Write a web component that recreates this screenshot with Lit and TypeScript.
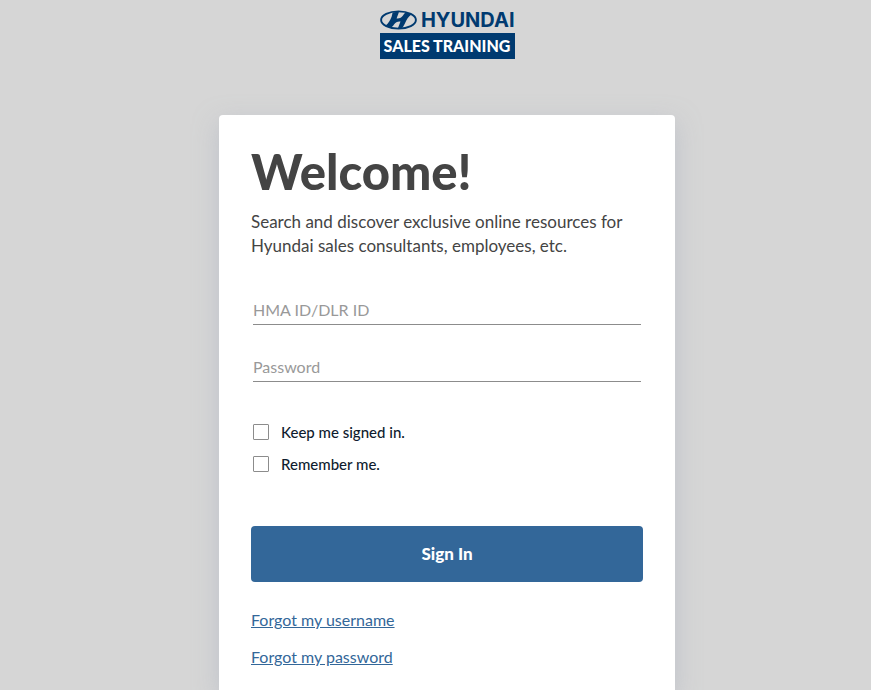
import { LitElement, html, css } from "lit";
import { customElement } from "lit/decorators.js";

@customElement("brand-logo")
class BrandLogo extends LitElement {
  static styles = css`
    :host {
      display: block;
      width: 135px;
      color: #003a70;
    }
    .top {
      display: flex;
      align-items: center;
      justify-content: space-between;
      height: 18px;
    }
    .mark {
      display: block;
      width: 37px;
      height: 20px;
    }
    .name {
      font: 700 20px/18px Inter, sans-serif;
    }
    .sub {
      margin-top: 4px;
      background: #003a70;
      color: #fff;
      font: 900 16px/26px Lato, sans-serif;
      height: 26px;
      text-align: center;
      white-space: nowrap;
    }
  `;

  render() {
    return html`
      <div class="top">
        <svg class="mark" viewBox="0 0 37 20" fill="currentColor" aria-hidden="true">
          <ellipse cx="18.5" cy="10" rx="17.4" ry="8.6" fill="none" stroke="currentColor" stroke-width="1.9" />
          <path
            d="M12.6 2.6 L19 1.6 C18.4 4.2 17.2 6.8 16.6 8.4 C19.4 8.8 21.4 7.6 23 5.4 C24.2 3.7 25 2.8 26.4 2.6 L31.4 4.6 C28.4 6.4 26.6 10 24.9 13.4 C23.6 16 22.6 17.6 21.6 18.2 L17.8 18.6 C18.8 16 19.8 13.6 20.5 11.6 C17.6 11.2 15.6 12.4 14 14.6 C12.8 16.4 12 17.4 10.6 17.5 L5.6 15.4 C8.6 13.6 10.2 10 11.6 6.8 C12.2 5.4 12.2 4 12.6 2.6 Z"
          />
        </svg>
        <span class="name">HYUNDAI</span>
      </div>
      <div class="sub">SALES TRAINING</div>
    `;
  }
}

@customElement("app-root")
class AppRoot extends LitElement {
  static styles = css`
    :host {
      display: flex;
      flex-direction: column;
      align-items: center;
      box-sizing: border-box;
      min-height: 100vh;
      padding: 11px 0 0 23px;
      overflow: hidden;
      background: #d6d6d6;
      color: #444;
      font-family: Lato, sans-serif;
    }
    .card {
      flex: 1;
      box-sizing: border-box;
      width: 100%;
      max-width: 456px;
      margin-top: 56px;
      padding: 32px 32px 20px;
      background: #fff;
      border-radius: 4px 4px 0 0;
      box-shadow: 0 8px 24px rgba(165, 173, 190, 0.5);
    }
    h1 {
      margin: 0;
      font-size: 49px;
      line-height: 48px;
      font-weight: 900;
    }
    .intro {
      margin: 15px 0 0;
      font-size: 17px;
      line-height: 24px;
    }
    .fields {
      display: grid;
      gap: 28px;
      margin: 38px 2px 0;
    }
    .field {
      box-sizing: border-box;
      width: 100%;
      height: 29px;
      padding: 0 0 2px;
      border: 0;
      border-bottom: 1px solid #8c8c8c;
      border-radius: 0;
      background: none;
      color: #444;
      font: 16px Lato, sans-serif;
    }
    .field::placeholder {
      color: #999;
      opacity: 1;
    }
    .checks {
      display: grid;
      gap: 16px;
      margin: 42px 2px 0;
    }
    .check {
      display: flex;
      align-items: center;
      gap: 12px;
      color: #0f1c2e;
      font: 500 15px/16px Lato, sans-serif;
    }
    .box {
      appearance: none;
      flex: none;
      width: 16px;
      height: 16px;
      margin: 0;
      border: 1px solid #8c8c8c;
      border-radius: 1px;
      background: #fff;
    }
    .box:checked {
      background: #336799;
    }
    .submit {
      display: block;
      width: 100%;
      height: 56px;
      margin-top: 54px;
      padding: 0 0 2px;
      border: 0;
      border-radius: 4px;
      background: #336799;
      color: #fff;
      font: 900 17px Lato, sans-serif;
      cursor: pointer;
    }
    .links {
      display: grid;
      justify-items: start;
      gap: 13px;
      margin-top: 26px;
    }
    .link {
      color: #336799;
      font-size: 16px;
      line-height: 24px;
    }
  `;

  render() {
    return html`
      <brand-logo></brand-logo>
      <main class="card">
        <h1>Welcome!</h1>
        <p class="intro">Search and discover exclusive online resources for Hyundai sales consultants, employees, etc.</p>
        <form @submit=${(e: Event) => e.preventDefault()}>
          <div class="fields">
            <input class="field" type="text" placeholder="HMA ID/DLR ID" aria-label="HMA ID/DLR ID" />
            <input class="field" type="password" placeholder="Password" aria-label="Password" />
          </div>
          <div class="checks">
            <label class="check"><input class="box" type="checkbox" />Keep me signed in.</label>
            <label class="check"><input class="box" type="checkbox" />Remember me.</label>
          </div>
          <button class="submit" type="submit">Sign In</button>
        </form>
        <nav class="links">
          <a class="link" href="#username">Forgot my username</a>
          <a class="link" href="#password">Forgot my password</a>
        </nav>
      </main>
    `;
  }
}
